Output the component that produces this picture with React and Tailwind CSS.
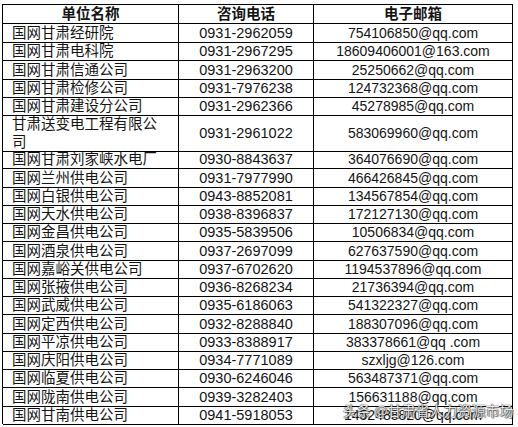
import React from "react";

const rows = [
  ["国网甘肃经研院", "0931-2962059", "754106850@qq.com"],
  ["国网甘肃电科院", "0931-2967295", "18609406001@163.com"],
  ["国网甘肃信通公司", "0931-2963200", "25250662@qq.com"],
  ["国网甘肃检修公司", "0931-7976238", "124732368@qq.com"],
  ["国网甘肃建设分公司", "0931-2962366", "45278985@qq.com"],
  ["TALL", "0931-2961022", "583069960@qq.com"],
  ["国网甘肃刘家峡水电厂", "0930-8843637", "364076690@qq.com"],
  ["国网兰州供电公司", "0931-7977990", "466426845@qq.com"],
  ["国网白银供电公司", "0943-8852081", "134567854@qq.com"],
  ["国网天水供电公司", "0938-8396837", "172127130@qq.com"],
  ["国网金昌供电公司", "0935-5839506", "10506834@qq.com"],
  ["国网酒泉供电公司", "0937-2697099", "627637590@qq.com"],
  ["国网嘉峪关供电公司", "0937-6702620", "1194537896@qq.com"],
  ["国网张掖供电公司", "0936-8268234", "21736394@qq.com"],
  ["国网武威供电公司", "0935-6186063", "541322327@qq.com"],
  ["国网定西供电公司", "0932-8288840", "188307096@qq.com"],
  ["国网平凉供电公司", "0933-8388917", "383378661@qq .com"],
  ["国网庆阳供电公司", "0934-7771089", "szxljg@126.com"],
  ["国网临夏供电公司", "0930-6246046", "563487371@qq.com"],
  ["国网陇南供电公司", "0939-3282403", "156631188@qq.com"],
  ["国网甘南供电公司", "0941-5918053", "1452488820@qq.com"],
];

export default function App() {
  return (
    <div className="relative w-[518px] h-[427px] bg-white overflow-hidden font-['Liberation_Sans','Noto_Sans_CJK_SC',sans-serif] text-[#141414]">
      <div className="ml-[2px] mt-[4px] w-[511px] border-l border-t border-black">
        <div className="grid grid-cols-[176px_135px_199px] h-[19px]">
          <div className="border-r border-b border-black flex items-center justify-center text-[14.5px] leading-[18px] font-bold">单位名称</div>
          <div className="border-r border-b border-black flex items-center justify-center text-[14.5px] leading-[18px] font-bold">咨询电话</div>
          <div className="border-r border-b border-black flex items-center justify-center text-[14.5px] leading-[18px] font-bold">电子邮箱</div>
        </div>
        {rows.map((r, i) => {
          const tall = r[0] === "TALL";
          return (
            <div
              key={i}
              className={
                "grid grid-cols-[176px_135px_199px] " +
                (tall ? "h-[35px]" : "h-[18.25px]")
              }
            >
              <div className="border-r border-b border-black flex items-center pl-[9px] text-[14.5px] leading-[18px]">
                {tall ? (
                  <span>
                    甘肃送变电工程有限公
                    <br />司
                  </span>
                ) : (
                  r[0]
                )}
              </div>
              <div className="border-r border-b border-black flex items-center justify-center text-[14.5px] leading-[18px]">
                {r[1]}
              </div>
              <div className="border-r border-b border-black flex items-center justify-center text-[14px] leading-[18px] whitespace-pre">
                {r[2]}
              </div>
            </div>
          );
        })}
      </div>
      <div className="absolute left-[343px] top-[402px] text-[14px] leading-[16px] text-white/90 whitespace-nowrap font-['Noto_Sans_CJK_SC',sans-serif] [text-shadow:0_0_1px_#222,0_0_1px_#222,1px_1px_1px_rgba(0,0,0,0.5)]">
        头条 @甘肃省人力资源市场
      </div>
    </div>
  );
}
